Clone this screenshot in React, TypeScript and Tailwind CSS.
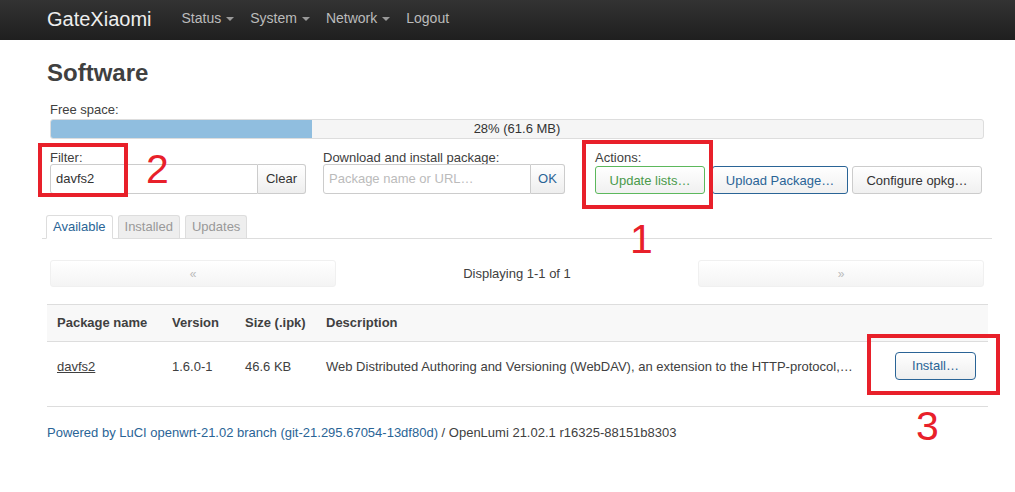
import { ReactNode } from 'react';

function Caret() {
  return <span className="ml-[5px] inline-block h-0 w-0 border-x-[4px] border-t-[4px] border-x-transparent border-t-[#999] align-middle" />;
}

function Btn({ children, className = '' }: { children: ReactNode; className?: string }) {
  return (
    <button
      className={`h-[28px] rounded-[3px] border bg-gradient-to-b from-white to-[#f0f0f0] px-3 text-[13px] leading-none ${className}`}
    >
      {children}
    </button>
  );
}

export default function App() {
  return (
    <div className="relative min-h-[492px] bg-white font-['Liberation_Sans',Arial,sans-serif] text-[13px] text-[#404040]">
      {/* Navbar */}
      <header className="flex h-[40px] items-center bg-gradient-to-b from-[#333] to-[#1f1f1f] pb-[3px] pl-[47px]">
        <span className="text-[20px] text-[#eee]">GateXiaomi</span>
        <nav className="ml-[30px] flex items-center gap-[16px] text-[14px] text-[#bbb]">
          <span>Status<Caret /></span>
          <span>System<Caret /></span>
          <span>Network<Caret /></span>
          <span>Logout</span>
        </nav>
      </header>

      <main className="pl-[47px] pr-[23px]">
        <h2 className="pt-[18px] text-[24px] leading-[30px] font-bold text-[#404040]">Software</h2>

        <div className="ml-[3px] mr-[8px] mt-[14px]">
          <div className="leading-[15px]">Free space:</div>
          <div className="relative mt-[2px] h-[20px] overflow-hidden rounded-[3px] border border-[#ddd] bg-[#f5f5f5]">
            <div className="h-full w-[28%] bg-[#90bedf]" />
            <span className="absolute inset-0 flex items-center justify-center text-[#333]">28% (61.6 MB)</span>
          </div>
        </div>

        {/* Controls */}
        <div className="mx-[3px] mt-[12px] flex">
          <div>
            <div className="leading-[13px]">Filter:</div>
            <div className="flex h-[30px]">
              <input
                defaultValue="davfs2"
                className="w-[208px] rounded-l-[3px] border border-[#ccc] px-[5px] text-[13px] text-[#333] outline-none"
              />
              <button className="w-[48px] rounded-r-[3px] border border-l-0 border-[#ccc] bg-gradient-to-b from-white to-[#eee] text-[13px] text-[#333]">
                Clear
              </button>
            </div>
          </div>
          <div className="ml-[17px]">
            <div className="leading-[13px]">Download and install package:</div>
            <div className="flex h-[30px]">
              <input
                placeholder="Package name or URL…"
                className="w-[208px] rounded-l-[3px] border border-[#ccc] px-[5px] text-[13px] outline-none placeholder:text-[#bbb]"
              />
              <button className="w-[34px] rounded-r-[3px] border border-l-0 border-[#ccc] bg-gradient-to-b from-white to-[#eee] text-[13px] text-[#2a6496]">
                OK
              </button>
            </div>
          </div>
          <div className="ml-[30px]">
            <div className="leading-[13px]">Actions:</div>
            <div className="mt-[2px] flex">
              <Btn className="w-[110px] border-[#5cb85c] text-[#4a9a4a]">Update lists…</Btn>
              <Btn className="ml-[7px] w-[136px] border-[#2a6496] text-[#2a6496]">Upload Package…</Btn>
              <Btn className="ml-[4px] w-[130px] border-[#ccc] text-[#333]">Configure opkg…</Btn>
            </div>
          </div>
        </div>

        {/* Tabs */}
        <div className="mt-[21px] -ml-[5px] flex gap-[5px] border-b border-[#ddd] pl-[4px]">
          <span className="-mb-px rounded-t-[3px] border border-b-white border-[#ddd] bg-white px-[6px] leading-[22px] text-[#2a6496]">Available</span>
          <span className="rounded-t-[3px] border border-b-0 border-[#ddd] bg-[#eee] px-[6px] leading-[22px] text-[#999]">Installed</span>
          <span className="rounded-t-[3px] border border-b-0 border-[#ddd] bg-[#eee] px-[6px] leading-[22px] text-[#999]">Updates</span>
        </div>

        {/* Pager */}
        <div className="ml-[3px] mr-[8px] mt-[21px] flex h-[27px] items-center">
          <div className="flex h-full w-[286px] items-center justify-center rounded-[3px] border border-[#f0f0f0] bg-gradient-to-b from-white to-[#f4f4f4] text-[12px] text-[#bbb]">«</div>
          <div className="flex-1 text-center">Displaying 1-1 of 1</div>
          <div className="flex h-full w-[286px] items-center justify-center rounded-[3px] border border-[#f0f0f0] bg-gradient-to-b from-white to-[#f4f4f4] text-[12px] text-[#bbb]">»</div>
        </div>

        {/* Table */}
        <table className="mt-[17px] w-[941px] border-collapse text-left">
          <thead>
            <tr className="h-[37px] border-y border-[#ddd] bg-[#f8f8f8] font-bold">
              <th className="w-[125px] pl-[10px]">Package name</th>
              <th className="w-[73px]">Version</th>
              <th className="w-[81px]">Size (.ipk)</th>
              <th>Description</th>
              <th className="w-[120px]"></th>
            </tr>
          </thead>
          <tbody>
            <tr className="h-[65px] border-b border-[#ddd]">
              <td className="pl-[10px] align-top pt-[15px]"><span className="underline">davfs2</span></td>
              <td className="align-top pt-[15px]">1.6.0-1</td>
              <td className="align-top pt-[15px]">46.6 KB</td>
              <td className="align-top pt-[15px]">Web Distributed Authoring and Versioning (WebDAV), an extension to the HTTP-protocol,…</td>
              <td className="align-top pt-[10px]">
                <button className="ml-[27px] h-[28px] w-[81px] rounded-[4px] border border-[#2a6496] bg-gradient-to-b from-white to-[#eee] text-[13px] text-[#2a6496]">Install…</button>
              </td>
            </tr>
          </tbody>
        </table>

        <footer className="pt-[18px] leading-[15px]">
          <span className="text-[#2a6496]">Powered by LuCI openwrt-21.02 branch (git-21.295.67054-13df80d)</span>
          <span> / OpenLumi 21.02.1 r16325-88151b8303</span>
        </footer>
      </main>

      {/* Annotations */}
      <div className="pointer-events-none absolute left-[38px] top-[143px] h-[54px] w-[90px] border-[4px] border-[#e8202a]" />
      <span className="pointer-events-none absolute left-[146px] top-[149px] text-[41px] leading-none text-[#e8202a]">2</span>
      <div className="pointer-events-none absolute left-[582px] top-[140px] h-[69px] w-[131px] border-[4px] border-[#e8202a]" />
      <span className="pointer-events-none absolute left-[630px] top-[219px] text-[41px] leading-none text-[#e8202a]">1</span>
      <div className="pointer-events-none absolute left-[867px] top-[334px] h-[61px] w-[133px] border-[4px] border-[#e8202a]" />
      <span className="pointer-events-none absolute left-[916px] top-[406px] text-[41px] leading-none text-[#e8202a]">3</span>
    </div>
  );
}
